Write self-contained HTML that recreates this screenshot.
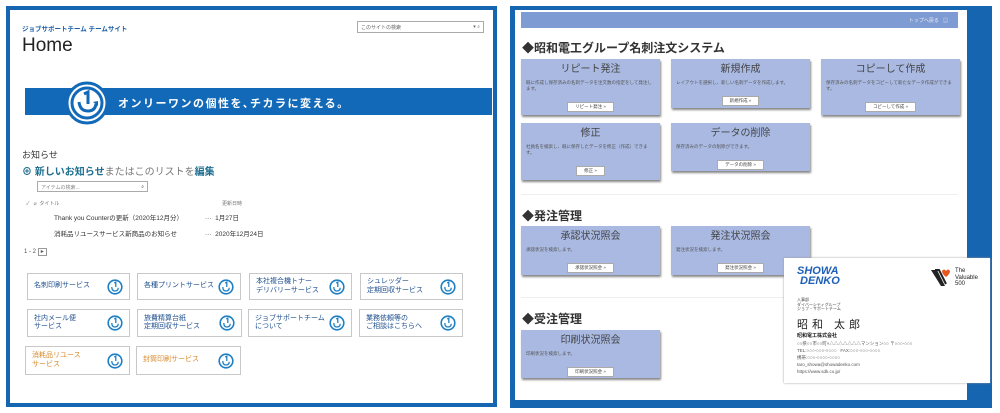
<!DOCTYPE html>
<html><head><meta charset="utf-8"><style>
*{margin:0;padding:0;box-sizing:border-box}
body{width:1000px;height:413px;background:#fff;position:relative;overflow:hidden;font-family:"Liberation Sans","Noto Sans CJK JP",sans-serif;}
.abs{position:absolute}
.lp{left:6px;top:6px;width:491px;height:401px;border:4px solid #1565b0;background:#fff}
.rp{left:510px;top:6px;width:482px;height:402px;background:#1565b0}
.rin{left:515px;top:10px;width:452px;height:390px;background:#fff}
.tile{position:absolute;border:1px solid #c8c8c8;background:#fff;font-size:7px;line-height:8.5px;color:#1e4f8f;padding-left:6px;display:flex;align-items:center}
.tile svg{position:absolute;right:6px;top:50%;margin-top:-8px}
.card{position:absolute;background:#a9b9e2;box-shadow:1px 2px 2px #888;text-align:center}
.card h3{font-size:10px;line-height:12px;font-weight:normal;color:#444;margin-top:5px}
.card p{font-size:4.5px;color:#555;text-align:left;padding:4px 5px 3px;line-height:6px}
.card .b{display:inline-block;background:#fff;border:1px solid #aaa;font-size:4.5px;line-height:6px;color:#444;padding:1px 7px;margin-top:1px}
.hd{position:absolute;left:522px;font-size:12px;font-weight:bold;color:#333}
</style></head><body>
<div class="abs lp"></div>
<div class="abs" style="left:22px;top:23px;font-size:6.5px;color:#1e5fa8;font-weight:bold">ジョブサポートチーム チームサイト</div>
<div class="abs" style="left:22px;top:35px;font-size:19px;color:#222">Home</div>
<div class="abs" style="left:357px;top:21px;width:127px;height:12px;border:1px solid #aaa;font-size:5px;color:#666;padding:2px 3px">このサイトの検索<span style="float:right">▾ ⌕</span></div>
<div class="abs" style="left:25px;top:88px;width:467px;height:27px;background:#1269b8"></div>
<svg class="abs" style="left:64px;top:80px" width="46" height="46" viewBox="0 0 46 46"><circle cx="23" cy="23" r="20" fill="#fff" stroke="#1269b8" stroke-width="3"/><circle cx="23" cy="23" r="15" fill="none" stroke="#1269b8" stroke-width="3"/><path d="M20 14l4-2v12" stroke="#1269b8" stroke-width="3" fill="none"/><path d="M15 22q1 9 9 9q7 0 8-7" stroke="#1269b8" stroke-width="3" fill="none"/><path d="M29 22l5-1 0 5z" fill="#1269b8"/></svg>
<div class="abs" style="left:118px;top:95px;font-size:11px;font-weight:bold;color:#fff;letter-spacing:1.5px">オンリーワンの個性を､チカラに変える。</div>
<div class="abs" style="left:22px;top:148px;font-size:9px;color:#333">お知らせ</div>
<div class="abs" style="left:22px;top:163px;font-size:10px;color:#1e6f8f"><span style="font-weight:bold">⊕ 新しいお知らせ</span><span style="color:#777">またはこのリストを</span><b>編集</b></div>
<div class="abs" style="left:37px;top:181px;width:111px;height:11px;border:1px solid #aaa;font-size:5px;color:#888;padding:2px 3px">アイテムの検索...<span style="float:right;color:#333">⌕</span></div>
<div class="abs" style="left:26px;top:200px;font-size:5px;color:#777">✓ &nbsp; ⌀ &nbsp;タイトル</div>
<div class="abs" style="left:222px;top:200px;font-size:5px;color:#777">更新日時</div>
<div class="abs" style="left:54px;top:212px;font-size:6.5px;color:#333">Thank you Counterの更新（2020年12月分）</div>
<div class="abs" style="left:205px;top:212px;font-size:6.5px;color:#333">··· &nbsp;1月27日</div>
<div class="abs" style="left:54px;top:228px;font-size:6.5px;color:#333">消耗品リユースサービス新商品のお知らせ</div>
<div class="abs" style="left:205px;top:228px;font-size:6.5px;color:#333">··· &nbsp;2020年12月24日</div>
<div class="abs" style="left:24px;top:248px;font-size:6px;color:#555">1 - 2 <span style="border:1px solid #999;padding:0 2px">▸</span></div>

<div class="tile" style="left:27px;top:273px;width:103px;height:27px">名刺印刷サービス<svg width="16" height="16" viewBox="0 0 20 20"><circle cx="10" cy="10" r="8.5" fill="none" stroke="#1e7fc4" stroke-width="2"/><path d="M9 5l2-1v6M6 10q0 5 4 5q4 0 4-4" stroke="#1e7fc4" stroke-width="1.6" fill="none"/></svg></div>
<div class="tile" style="left:137px;top:273px;width:104px;height:27px">各種プリントサービス<svg width="16" height="16" viewBox="0 0 20 20"><circle cx="10" cy="10" r="8.5" fill="none" stroke="#1e7fc4" stroke-width="2"/><path d="M9 5l2-1v6M6 10q0 5 4 5q4 0 4-4" stroke="#1e7fc4" stroke-width="1.6" fill="none"/></svg></div>
<div class="tile" style="left:249px;top:273px;width:103px;height:27px">本社複合機トナー<br>デリバリーサービス<svg width="16" height="16" viewBox="0 0 20 20"><circle cx="10" cy="10" r="8.5" fill="none" stroke="#1e7fc4" stroke-width="2"/><path d="M9 5l2-1v6M6 10q0 5 4 5q4 0 4-4" stroke="#1e7fc4" stroke-width="1.6" fill="none"/></svg></div>
<div class="tile" style="left:360px;top:273px;width:103px;height:27px">シュレッダー<br>定期回収サービス<svg width="16" height="16" viewBox="0 0 20 20"><circle cx="10" cy="10" r="8.5" fill="none" stroke="#1e7fc4" stroke-width="2"/><path d="M9 5l2-1v6M6 10q0 5 4 5q4 0 4-4" stroke="#1e7fc4" stroke-width="1.6" fill="none"/></svg></div>
<div class="tile" style="left:27px;top:309px;width:103px;height:28px">社内メール便<br>サービス<svg width="16" height="16" viewBox="0 0 20 20"><circle cx="10" cy="10" r="8.5" fill="none" stroke="#1e7fc4" stroke-width="2"/><path d="M9 5l2-1v6M6 10q0 5 4 5q4 0 4-4" stroke="#1e7fc4" stroke-width="1.6" fill="none"/></svg></div>
<div class="tile" style="left:137px;top:309px;width:105px;height:28px">旅費精算台紙<br>定期回収サービス<svg width="16" height="16" viewBox="0 0 20 20"><circle cx="10" cy="10" r="8.5" fill="none" stroke="#1e7fc4" stroke-width="2"/><path d="M9 5l2-1v6M6 10q0 5 4 5q4 0 4-4" stroke="#1e7fc4" stroke-width="1.6" fill="none"/></svg></div>
<div class="tile" style="left:248px;top:309px;width:104px;height:28px">ジョブサポートチーム<br>について<svg width="16" height="16" viewBox="0 0 20 20"><circle cx="10" cy="10" r="8.5" fill="none" stroke="#1e7fc4" stroke-width="2"/><path d="M9 5l2-1v6M6 10q0 5 4 5q4 0 4-4" stroke="#1e7fc4" stroke-width="1.6" fill="none"/></svg></div>
<div class="tile" style="left:359px;top:309px;width:104px;height:28px">業務依頼等の<br>ご相談はこちらへ<svg width="16" height="16" viewBox="0 0 20 20"><circle cx="10" cy="10" r="8.5" fill="none" stroke="#1e7fc4" stroke-width="2"/><path d="M9 5l2-1v6M6 10q0 5 4 5q4 0 4-4" stroke="#1e7fc4" stroke-width="1.6" fill="none"/></svg></div>
<div class="tile" style="left:25px;top:346px;width:105px;height:29px;color:#d98a2b">消耗品リユース<br>サービス<svg width="16" height="16" viewBox="0 0 20 20"><circle cx="10" cy="10" r="8.5" fill="none" stroke="#1e7fc4" stroke-width="2"/><path d="M9 5l2-1v6M6 10q0 5 4 5q4 0 4-4" stroke="#1e7fc4" stroke-width="1.6" fill="none"/></svg></div>
<div class="tile" style="left:136px;top:346px;width:105px;height:29px;color:#d98a2b">封筒印刷サービス<svg width="16" height="16" viewBox="0 0 20 20"><circle cx="10" cy="10" r="8.5" fill="none" stroke="#1e7fc4" stroke-width="2"/><path d="M9 5l2-1v6M6 10q0 5 4 5q4 0 4-4" stroke="#1e7fc4" stroke-width="1.6" fill="none"/></svg></div>

<div class="abs rp"></div>
<div class="abs rin"></div>
<div class="abs" style="left:521px;top:12px;width:437px;height:16px;background:#7f9bd4;font-size:5px;color:#eee;text-align:right;padding:5px 10px">トップへ戻る &nbsp; ▤</div>
<div class="hd" style="top:39px">◆昭和電工グループ名刺注文システム</div>
<div class="card" style="left:521px;top:59px;width:139px;height:56px"><h3>リピート発注</h3><p>既に作成し保存済みの名刺データを注文数の指定をして発注します。</p><span class="b">リピート発注 »</span></div>
<div class="card" style="left:671px;top:59px;width:139px;height:49px"><h3>新規作成</h3><p>レイアウトを選択し、新しい名刺データを作成します。</p><span class="b">新規作成 »</span></div>
<div class="card" style="left:821px;top:59px;width:139px;height:56px"><h3>コピーして作成</h3><p>保存済みの名刺データをコピーして新たなデータ作成ができます。</p><span class="b">コピーして作成 »</span></div>
<div class="card" style="left:521px;top:123px;width:139px;height:57px"><h3>修正</h3><p>社員名を検索し、既に保存したデータを修正（作成）できます。</p><span class="b">修正 »</span></div>
<div class="card" style="left:671px;top:123px;width:139px;height:48px"><h3>データの削除</h3><p>保存済みのデータの削除ができます。</p><span class="b">データの削除 »</span></div>
<div class="abs" style="left:521px;top:194px;width:437px;height:1px;background:#eee"></div>
<div class="hd" style="top:207px">◆発注管理</div>
<div class="card" style="left:521px;top:226px;width:139px;height:49px"><h3>承認状況照会</h3><p>承認状況を検索します。</p><span class="b">承認状況照会 »</span></div>
<div class="card" style="left:671px;top:226px;width:139px;height:49px"><h3>発注状況照会</h3><p>発注状況を検索します。</p><span class="b">発注状況照会 »</span></div>
<div class="abs" style="left:521px;top:297px;width:270px;height:1px;background:#eee"></div>
<div class="hd" style="top:310px">◆受注管理</div>
<div class="card" style="left:521px;top:330px;width:139px;height:48px"><h3>印刷状況照会</h3><p>印刷状況を検索します。</p><span class="b">印刷状況照会 »</span></div>

<div class="abs" style="left:784px;top:258px;width:206px;height:125px;background:#fff;box-shadow:0 0 2px #999"></div>
<div class="abs" style="left:797px;top:266px;font-size:11px;font-weight:bold;color:#1e5fb8;line-height:10px;font-style:italic">SHOWA<br>&nbsp;DENKO</div>
<svg class="abs" style="left:930px;top:268px" width="22" height="20" viewBox="0 0 22 20"><path d="M1 2h6l8 16h-4z" fill="#222"/><path d="M5 2h4l7 14" stroke="#222" stroke-width="2" fill="none"/><path d="M16 3q2-3 4 0q0 3-4 6q-4-3-4-6q2-3 4 0" fill="#e8551e"/></svg>
<div class="abs" style="left:955px;top:268px;font-size:6px;line-height:6.5px;color:#222">The<br>Valuable<br>500</div>
<div class="abs" style="left:797px;top:298px;font-size:4px;line-height:4.5px;color:#444">人事部<br>ダイバーシティグループ<br>ジョブ・サポートチーム</div>
<div class="abs" style="left:797px;top:316px;font-size:11px;color:#222;letter-spacing:4px">昭和 太郎</div>
<div class="abs" style="left:797px;top:332px;font-size:5px;font-weight:bold;color:#222">昭和電工株式会社</div>
<div class="abs" style="left:797px;top:340px;font-size:4.5px;line-height:7px;color:#555">○○県○○市○○町×△△△△△△△マンション○○ 〒○○○-○○○<br>TEL:○○○-○○○-○○○○ &nbsp; FAX:○○○-○○○-○○○○<br>携帯:○○○-○○○○-○○○○<br>taro_showa@showadenko.com<br>https://www.sdk.co.jp/</div>
</body></html>
